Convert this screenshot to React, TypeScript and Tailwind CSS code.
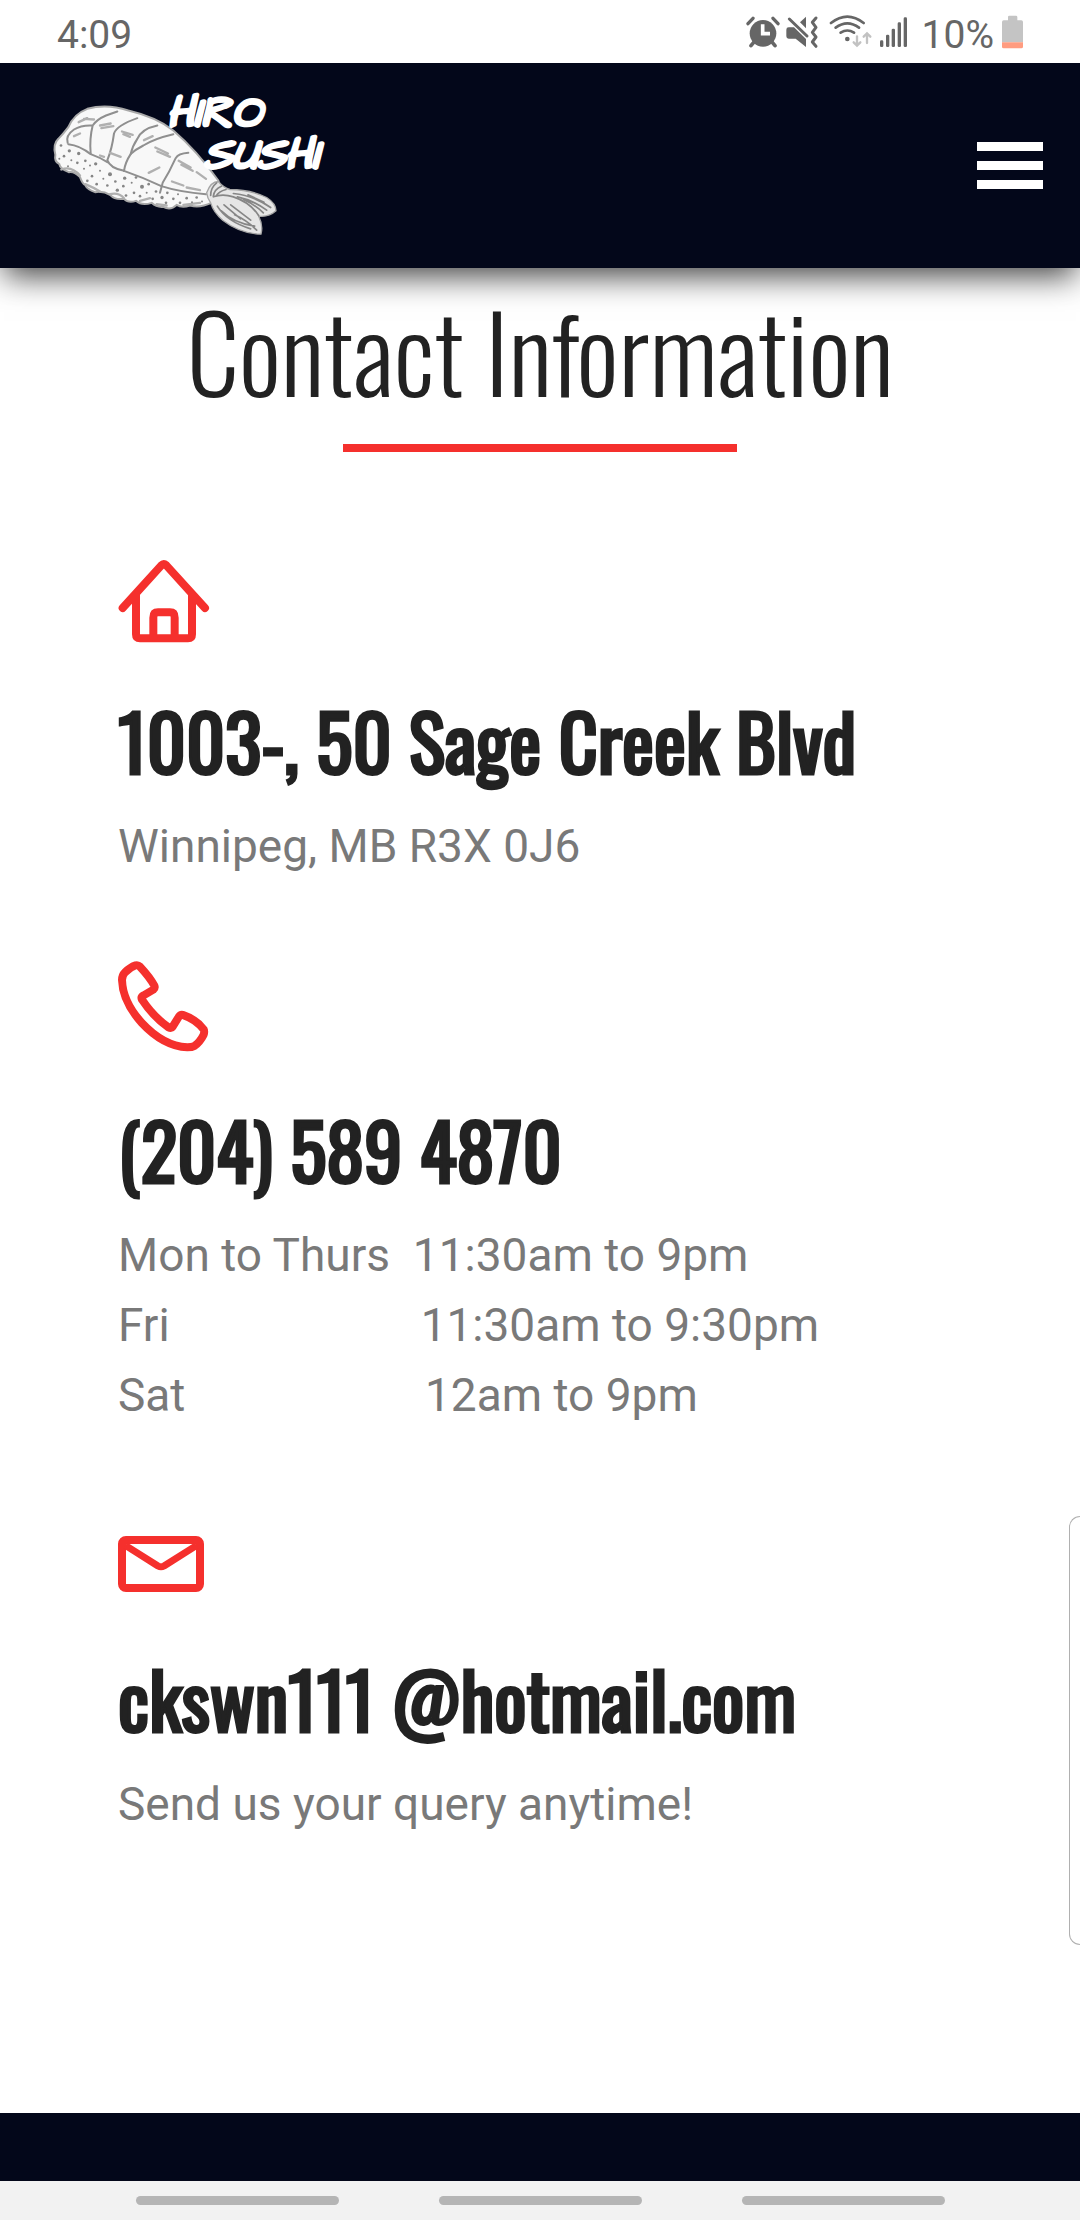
import type { ReactNode } from "react";

const riceSpecks = [
  [183, 440, 4], [208, 456, 5], [236, 464, 5], [192, 472, 4], [178, 480, 3], [214, 484, 3],
  [232, 492, 4], [204, 502, 3], [256, 486, 4], [252, 510, 3], [270, 500, 3], [287, 495, 5],
  [300, 516, 3], [276, 532, 4], [262, 546, 4], [290, 556, 4], [310, 540, 3], [330, 526, 6],
  [322, 560, 4], [346, 548, 4], [352, 574, 5], [374, 538, 5], [370, 562, 4], [378, 590, 4],
  [395, 552, 3], [402, 582, 4], [408, 536, 4], [426, 564, 6], [420, 592, 4], [440, 582, 3],
  [446, 556, 4], [458, 600, 4], [468, 578, 4], [486, 596, 5], [502, 582, 4], [498, 612, 4],
  [520, 600, 4], [534, 586, 3], [540, 612, 4], [560, 598, 4], [576, 610, 3], [590, 596, 4],
  [606, 608, 3],
];

function HiroSushiLogo() {
  return (
    <svg viewBox="150 280 840 440" className="h-[147px] w-[280px] overflow-visible" role="img" aria-label="Hiro Sushi">
      <path
        d="M205 385Q222 345 262 330Q320 314 385 335Q470 355 520 395Q590 455 655 545Q662 560 640 585Q632 600 634 612Q600 628 570 620Q545 628 530 618Q512 636 490 624Q470 626 455 612Q425 622 408 606Q385 614 372 600Q345 604 330 588Q310 576 285 580Q262 572 255 558Q248 556 240 535Q222 516 206 520Q180 510 178 496Q162 488 166 468Q158 436 175 420Q190 405 205 385Z"
        fill="#f8f8f8"
        stroke="#a9a9a9"
        strokeWidth="6"
        strokeLinejoin="round"
      />
      <g fill="none" stroke="#8f8f8f" strokeWidth="6" strokeLinecap="round">
        <path d="M203 432Q196 410 222 392Q244 378 278 380M278 380Q290 362 318 350L352 338M278 380Q268 420 272 464" />
        <path d="M412 358Q350 380 342 404Q336 450 322 484Q330 508 372 516" />
        <path d="M472 380Q425 390 412 420Q398 440 392 466Q376 490 372 516" />
        <path d="M520 406Q460 420 430 440Q406 452 392 466" />
        <path d="M565 462Q535 464 527 478Q508 520 488 552L480 582" />
        <path d="M205 436Q240 440 272 466Q300 476 322 490M372 516Q430 536 484 562Q540 580 618 586" />
      </g>
      <g fill="none" stroke="#b0b0b0" strokeWidth="7" strokeLinecap="round">
        <path d="M252 360L282 362M236 370L262 358M300 380L332 374M304 388L340 382M366 398L398 408M370 406L390 414M432 424L458 412M466 446L504 464M472 458L510 474M446 522L478 506M536 486L572 506M544 498L578 516M330 462L362 474M516 548L550 560M590 520L618 540M222 412L240 404M560 566L600 574M300 470L312 474" />
        <path d="M184 512Q214 500 240 530M256 556Q280 566 300 578M330 586Q356 580 372 598M420 606L450 598M470 616L500 620M550 618L600 612" />
      </g>
      <g fill="#858585">
        {riceSpecks.map(([x, y, r]) => (
          <circle key={`${x}-${y}`} cx={x} cy={y} r={r} />
        ))}
      </g>
      <path
        d="M655 548Q632 548 620 582Q622 598 632 612Q640 640 668 664Q720 704 783 706Q790 680 776 652Q806 656 828 636Q828 614 800 596Q750 572 690 572Q672 568 655 548Z"
        fill="#e6e6e6"
        stroke="#a5a5a5"
        strokeWidth="4"
      />
      <g fill="none" stroke="#868686" strokeWidth="5" strokeLinecap="round">
        <path d="M650 552Q632 566 632 590M664 562Q642 572 640 592M678 572Q656 578 648 592M640 594Q668 584 700 594Q750 610 776 650" />
        <path d="M700 584Q760 590 812 626M712 594Q760 604 800 634M730 602Q766 618 790 642M744 588L792 610" />
        <path d="M652 622Q680 668 752 690M664 636Q700 672 764 682M692 618L752 664M704 648Q740 664 770 694M672 618L722 660" />
      </g>
      <g
        fill="#ffffff"
        stroke="#ffffff"
        strokeWidth="11"
        strokeLinejoin="round"
        fontFamily="'Architects Daughter', 'Comic Neue', cursive"
        fontStyle="italic"
        fontSize="132"
      >
        <text x="502" y="382">HIRO</text>
        <text x="612" y="508">SUSHI</text>
      </g>
    </svg>
  );
}

function StatusBar() {
  return (
    <div className="relative z-20 flex h-[63px] items-end justify-between bg-white px-[57px] pb-3.5 font-['Roboto',sans-serif] text-[39px] leading-7 text-[#666666]">
      <span>4:09</span>
      <div className="flex items-end">
        <svg viewBox="75 46 102 102" className="mr-[5px] size-[34px]" fill="#666666" aria-label="Alarm set">
          <circle cx="126" cy="101" r="40" />
          <path d="M81 72L96 56M171 72L156 56" stroke="#666666" strokeWidth="10" strokeLinecap="round" />
          <path d="M100 126L90 138M152 126L162 138" stroke="#666666" strokeWidth="11" strokeLinecap="round" />
          <path d="M125 74V102H147" fill="none" stroke="#ffffff" strokeWidth="11" />
        </svg>
        <svg viewBox="192 46 102 102" className="mr-[9px] size-[34px]" fill="#666666" aria-label="Muted, vibrate">
          <path d="M196 90Q196 83 203 83H219L255 118V142L224 117H203Q196 117 196 110Z" />
          <path d="M237 68L255 51V86Z" />
          <path d="M205 58L258 109" stroke="#666666" strokeWidth="9" strokeLinecap="round" />
          <path d="M285 55L274 68L285 83L274 98L285 112L274 127L285 140" fill="none" stroke="#666666" strokeWidth="9" strokeLinecap="round" strokeLinejoin="round" />
        </svg>
        <svg viewBox="324 46 132 102" className="mr-2 h-[34px] w-11" fill="none" strokeLinecap="round" aria-label="Wi-Fi">
          <path d="M333 70Q382 32 431 70M347 84Q382 58 417 84M362 99Q382 86 402 99" stroke="#666666" strokeWidth="8" />
          <circle cx="382" cy="118" r="7" fill="#666666" />
          <path d="M411 110V136M401 128L411 138L421 128M441 130V104M431 111L441 101L451 111" stroke="#c2c2c2" strokeWidth="7" />
        </svg>
        <svg viewBox="480 46 81 102" className="mr-[15px] h-[34px] w-[27px]" fill="#666666" aria-label="Mobile signal">
          <rect x="480" y="122" width="10" height="20" rx="4" />
          <rect x="498" y="105" width="10" height="37" rx="4" />
          <rect x="515" y="87" width="10" height="55" rx="4" />
          <rect x="533" y="68" width="10" height="74" rx="4" />
          <rect x="551" y="53" width="10" height="89" rx="4" />
        </svg>
        <span>10%</span>
        <svg viewBox="846 46 63 102" className="ml-2 h-[34px] w-[21px]" fill="#c4c4c4" aria-label="Battery low">
          <path d="M864 62V52Q864 48 868 48H888Q892 48 892 52V62H904Q909 62 909 67V128H846V67Q846 62 851 62Z" />
          <path d="M846 128H909V141Q909 146 904 146H851Q846 146 846 141Z" fill="#ff9c80" />
        </svg>
      </div>
    </div>
  );
}

function NavBar() {
  return (
    <header className="relative z-10 flex h-[205px] items-center justify-between bg-[#03071a] pr-[37px] pl-[50px] shadow-[0_12px_30px_-4px_rgba(0,0,0,0.75)]">
      <a href="#home">
        <HiroSushiLogo />
      </a>
      <button type="button" aria-label="Open menu" className="flex w-[66px] flex-col gap-2.5">
        <span className="h-[9px] bg-white" />
        <span className="h-[9px] bg-white" />
        <span className="h-[9px] bg-white" />
      </button>
    </header>
  );
}

function HomeIcon() {
  return (
    <svg viewBox="54 36 270 270" className="size-[90px] overflow-visible" fill="none" stroke="currentColor" strokeWidth="24" strokeLinecap="round" strokeLinejoin="round" aria-hidden="true">
      <path d="M68 204L184 76Q191 69 199 76L315 204" />
      <path d="M108 165V283Q108 295 120 295H264Q276 295 276 283V165" />
      <path d="M160 290V233Q160 217 174 217H210Q224 217 224 233V290" />
    </svg>
  );
}

function PhoneIcon() {
  return (
    <svg viewBox="54 63 270 270" className="size-[90px] overflow-visible" fill="none" stroke="currentColor" strokeWidth="24" strokeLinejoin="round" aria-hidden="true">
      <path d="M107 76Q114 74 120 80Q150 112 163 137Q166 144 160 149L131 166Q122 171 126 179Q158 228 205 262Q214 266 218 260L236 231Q242 222 252 226Q288 238 311 268Q314 274 311 284Q300 306 283 318Q276 322 262 322Q190 318 125 248Q68 185 66 120Q66 106 75 97Q90 82 107 76Z" />
    </svg>
  );
}

function MailIcon() {
  return (
    <svg viewBox="54 -30 270 270" className="size-[90px] overflow-visible" fill="none" stroke="currentColor" strokeWidth="24" strokeLinejoin="round" aria-hidden="true">
      <rect x="66" y="60" width="234" height="144" rx="12" />
      <path d="M76 76L174 138Q183 143 192 138L290 76" strokeWidth="21" />
    </svg>
  );
}

function ContactItem({ icon, title, children }: { icon: ReactNode; title: ReactNode; children: ReactNode }) {
  return (
    <section>
      <div className="text-[#f5302d]">{icon}</div>
      <h3 className="mt-[55px] mb-7 font-['Oswald',sans-serif] text-[76px] leading-[86px] font-normal text-[#222222] [-webkit-text-stroke:3px_#222222]">
        {title}
      </h3>
      <div className="text-[46px] leading-[70px] whitespace-pre text-[#797979]">{children}</div>
    </section>
  );
}

const hours = [
  "Mon to Thurs  11:30am to 9pm",
  "Fri" + " ".repeat(22) + "11:30am to 9:30pm",
  "Sat" + " ".repeat(21) + "12am to 9pm",
];

export default function App() {
  return (
    <div className="relative flex min-h-screen flex-col bg-white font-['Roboto',sans-serif]">
      <StatusBar />
      <NavBar />
      <main className="flex-1 pt-[22px] pb-20">
        <h2 className="text-center font-['Oswald',sans-serif] text-[105px] leading-[120px] font-light text-[#222222]">
          Contact Information
        </h2>
        <div className="mx-auto mt-[34px] h-2 w-[394px] bg-[#f5302d]" />
        <div className="mt-[100px] flex flex-col gap-20 px-[118px]">
          <ContactItem icon={<HomeIcon />} title="1003-, 50 Sage Creek Blvd">
            <p>Winnipeg, MB R3X 0J6</p>
          </ContactItem>
          <ContactItem icon={<PhoneIcon />} title={<a href="tel:+12045894870">(204) 589 4870</a>}>
            {hours.map((line) => (
              <p key={line}>{line}</p>
            ))}
          </ContactItem>
          <ContactItem icon={<MailIcon />} title={<a href="mailto:ckswn111@hotmail.com">ckswn111 @hotmail.com</a>}>
            <p>Send us your query anytime!</p>
          </ContactItem>
        </div>
      </main>
      <footer className="h-[68px] bg-[#03071a]" />
      <nav aria-label="System navigation" className="flex h-[39px] items-center justify-center gap-[100px] bg-[#f2f2f2]">
        <button type="button" aria-label="Recents" className="h-[9px] w-[203px] rounded-full bg-[#b5b5b5]" />
        <button type="button" aria-label="Home" className="h-[9px] w-[203px] rounded-full bg-[#b5b5b5]" />
        <button type="button" aria-label="Back" className="h-[9px] w-[203px] rounded-full bg-[#b5b5b5]" />
      </nav>
      <div className="absolute top-[1516px] right-0 h-[429px] w-[11px] rounded-l-[14px] border border-r-0 border-[#b0b0b0] bg-white" />
    </div>
  );
}
